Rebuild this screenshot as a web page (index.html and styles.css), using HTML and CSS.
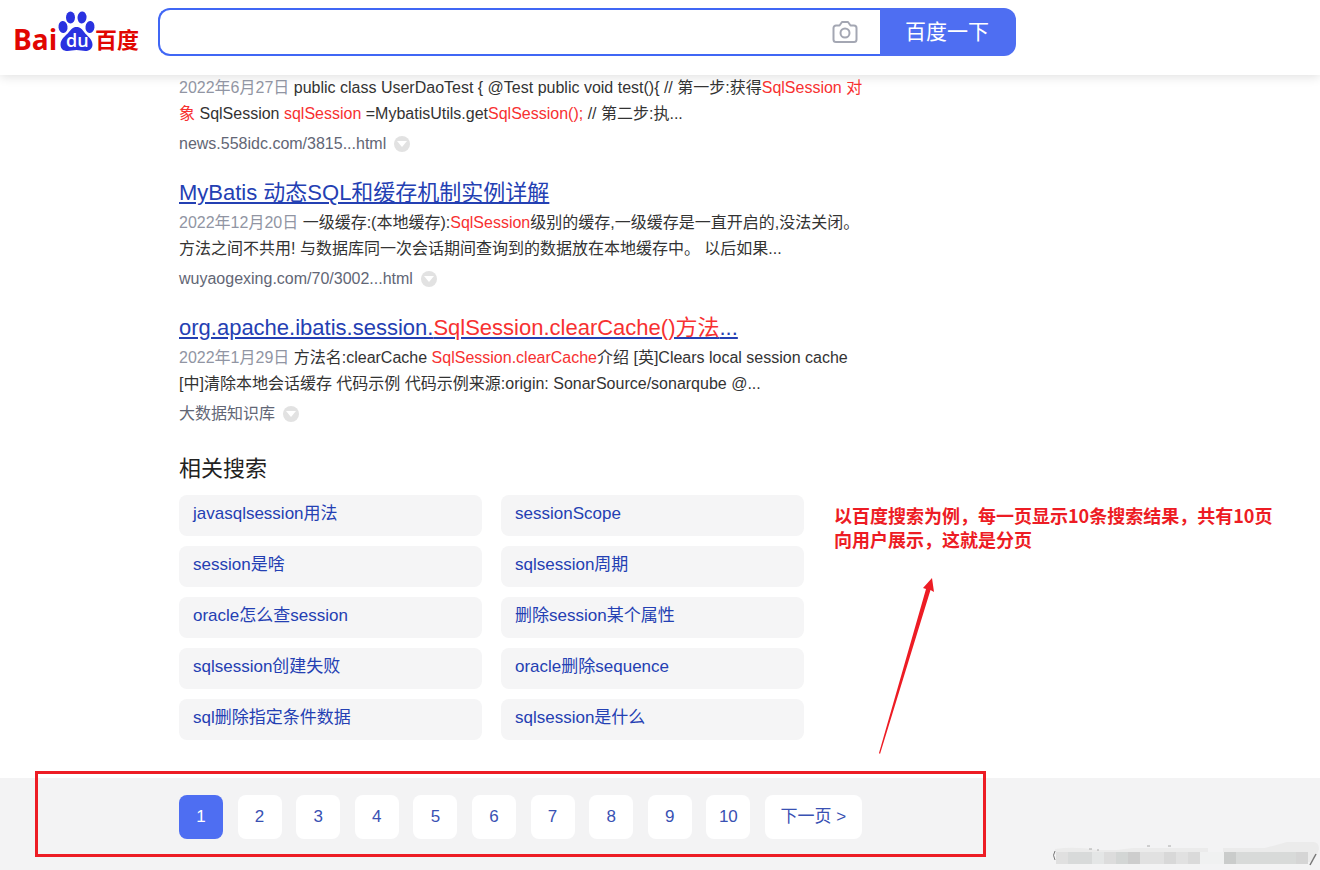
FILE: index.html
```html
<!DOCTYPE html>
<html lang="zh-CN">
<head>
<meta charset="utf-8">
<title>百度搜索</title>
<link rel="stylesheet" href="styles.css">
</head>
<body>
<header class="header">
  <a class="logo" href="#" aria-label="百度首页">
    <svg width="136" height="56" viewBox="-6 0 136 56">
      <g fill="#e10602">
        <text x="-1" y="42" font-size="28" class="logo-latin">Bai</text>
        <text x="81" y="40" font-size="22" class="logo-cjk">百度</text>
      </g>
      <g fill="#2a32e0">
        <ellipse cx="49" cy="19" rx="4.5" ry="6" transform="rotate(-8 49 19)"/>
        <ellipse cx="56.500" cy="9.500" rx="4.500" ry="6"/>
        <ellipse cx="68" cy="9.500" rx="4.500" ry="6" transform="rotate(5 68 9.500)"/>
        <ellipse cx="76" cy="19" rx="4.500" ry="6" transform="rotate(8 76 19)"/>
        <path d="M62.500 19c4 0 6 2.500 8 5.500s8 6.500 8 12c0 4-3 6.500-7 6.500-3 0-5.500-1-9-1s-6 1-9 1c-4 0-7-2-7-6.500 0-5.500 5.500-9 8-12s4-5.500 8-5.500z"/>
      </g>
      <text x="52" y="39" font-size="18" fill="#fff" class="logo-du">du</text>
    </svg>
  </a>
  <form class="search">
    <div class="search-box">
      <input class="search-input" type="text" aria-label="搜索">
      <button class="camera" type="button" aria-label="按图片搜索">
        <svg width="26" height="24" viewBox="0 0 26 24" fill="none" stroke="#a4a7b3" stroke-width="2" stroke-linejoin="round">
          <path d="M4 5.500h3.500L10 2h6l2.500 3.500H22a2.500 2.500 0 0 1 2.500 2.500v11.500A2.500 2.500 0 0 1 22 22H4a2.500 2.500 0 0 1-2.500-2.500V8A2.500 2.500 0 0 1 4 5.500z"/>
          <circle cx="13" cy="13" r="4.500"/>
        </svg>
      </button>
    </div>
    <button class="search-button" type="submit">百度一下</button>
  </form>
</header>

<main class="content">
  <article class="result">
    <p class="snippet"><span class="date">2022年6月27日</span> public class UserDaoTest { @Test public void test(){ // 第一步:获得<em>SqlSession 对<br>象</em> SqlSession <em>sqlSession</em> =MybatisUtils.get<em>SqlSession();</em> // 第二步:执...</p>
    <div class="source"><a href="#">news.558idc.com/3815...html</a><span class="more"></span></div>
  </article>
  <article class="result">
    <h3 class="title"><a href="#">MyBatis 动态SQL和缓存机制实例详解</a></h3>
    <p class="snippet"><span class="date">2022年12月20日</span> 一级缓存:(本地缓存):<em>SqlSession</em>级别的缓存,一级缓存是一直开启的,没法关闭。<br>方法之间不共用! 与数据库同一次会话期间查询到的数据放在本地缓存中。 以后如果...</p>
    <div class="source"><a href="#">wuyaogexing.com/70/3002...html</a><span class="more"></span></div>
  </article>
  <article class="result">
    <h3 class="title"><a href="#">org.apache.ibatis.session.<em>SqlSession.clearCache()方法</em>...</a></h3>
    <p class="snippet"><span class="date">2022年1月29日</span> 方法名:clearCache <em>SqlSession.clearCache</em>介绍 [英]Clears local session cache<br>[中]清除本地会话缓存 代码示例 代码示例来源:origin: SonarSource/sonarqube @...</p>
    <div class="source"><a href="#">大数据知识库</a><span class="more"></span></div>
  </article>

  <section class="related">
    <h2 class="related-title">相关搜索</h2>
    <div class="related-grid">
      <a href="#">javasqlsession用法</a><a href="#">sessionScope</a>
      <a href="#">session是啥</a><a href="#">sqlsession周期</a>
      <a href="#">oracle怎么查session</a><a href="#">删除session某个属性</a>
      <a href="#">sqlsession创建失败</a><a href="#">oracle删除sequence</a>
      <a href="#">sql删除指定条件数据</a><a href="#">sqlsession是什么</a>
    </div>
  </section>
</main>

<footer class="footer">
  <nav class="pages" aria-label="分页">
    <a class="current" href="#" aria-current="page">1</a>
    <a href="#">2</a>
    <a href="#">3</a>
    <a href="#">4</a>
    <a href="#">5</a>
    <a href="#">6</a>
    <a href="#">7</a>
    <a href="#">8</a>
    <a href="#">9</a>
    <a href="#">10</a>
    <a class="next" href="#">下一页 &gt;</a>
  </nav>
  <svg class="mosaic" width="266" height="30" viewBox="0 0 266 30">
    <path d="M2 9q20-3 42 1h20l16-2h75v14H4zM170 8h42l22-6h26q6 0 6 7-2 8-9 13h-87z" fill="#ebebeb"/>
    <path d="M2 11q-3 4 0 9" stroke="#777" fill="none"/>
    <path d="M36 9h3M44 10h2M94 6h3M115 6h3" stroke="#aaa"/>
    <g>
      <path d="M3 12h12v12H3z" fill="#e0e0e0"/>
      <path d="M15 12h24v12H15z" fill="#d8dada"/>
      <path d="M39 12h12v12H39z" fill="#e4e6e6"/>
      <path d="M51 12h12v12H51z" fill="#dcdcdc"/>
      <path d="M63 12h12v12H63z" fill="#d3d6d5"/>
      <path d="M75 12h12v12H75z" fill="#cdcdcd"/>
      <path d="M87 12h24v12H87z" fill="#e1e1e1"/>
      <path d="M111 12h12v12h-12z" fill="#d8d8d8"/>
      <path d="M123 12h12v12h-12z" fill="#e1e1e1"/>
      <path d="M135 12h12v12h-12z" fill="#dadada"/>
      <path d="M147 12h24v12h-24z" fill="#f0f1f1"/>
      <path d="M171 12h12v12h-12z" fill="#cacccb"/>
      <path d="M183 12h60v12h-60z" fill="#d8dad9"/>
      <path d="M243 12h12v12h-12z" fill="#d5d5d5"/>
    </g>
    <path d="M257 25l6-11" stroke="#777" stroke-width="1.500"/>
  </svg>
</footer>

<div class="frame"></div>
<p class="note">以百度搜索为例，每一页显示10条搜索结果，共有10页<br>向用户展示，这就是分页</p>
<svg class="arrow" width="60" height="180" viewBox="0 0 60 180">
  <path d="M53 1L55 15L51.500 13L1 177L0 176L47 12L44 11z" fill="#ed1c24"/>
</svg>
</body>
</html>
```
FILE: styles.css
```css
* { box-sizing: border-box; }
body {
  position: relative;
  margin: 0;
  min-height: 100vh;
  display: flex;
  flex-direction: column;
  background: #fff;
  color: #222;
  font-family: "Liberation Sans", "Noto Sans CJK SC", sans-serif;
  font-size: 16px;
}
a { color: inherit; text-decoration: none; }
em { font-style: normal; color: #f73131; }
p, h2, h3 { margin: 0; font-weight: 400; }

.header {
  display: flex;
  align-items: flex-start;
  height: 75px;
  padding: 8px;
  box-shadow: 0 2px 10px rgba(0, 0, 0, 0.12);
}
.logo { width: 150px; }
.logo svg { display: block; }
.logo-latin { font-family: "Open Sans", "Noto Sans", sans-serif; font-weight: 700; }
.logo-du { font-family: "Open Sans", "Noto Sans", sans-serif; font-weight: 600; }
.logo-cjk { font-family: "Noto Sans CJK SC", sans-serif; font-weight: 700; }
.search { display: flex; flex: 0 1 858px; height: 48px; }
.search-box {
  display: flex;
  flex: 1;
  align-items: center;
  border: 2px solid #4067f5;
  border-right: 0;
  border-radius: 12px 0 0 12px;
  padding-right: 22px;
}
.search-input {
  flex: 1;
  min-width: 0;
  border: 0;
  outline: 0;
  padding: 0 16px;
  background: none;
  font: inherit;
}
.camera { display: flex; padding: 0; border: 0; background: none; }
.search-button {
  width: 136px;
  border: 0;
  border-radius: 0 12px 12px 0;
  padding: 0 8px 4px 6px;
  background: #4e6ef2;
  color: #fff;
  font-family: inherit;
  font-size: 21px;
}

.content { padding-left: 179px; flex: 1; white-space: nowrap; }
.result { margin-bottom: 20px; }
.title { font-size: 22px; line-height: 34px; color: #2440b3; }
.title a { text-decoration: underline; }
.snippet { line-height: 26px; color: #333; }
.date { color: #9195a3; }
.source {
  display: flex;
  align-items: center;
  gap: 8px;
  margin-top: 5px;
  line-height: 24px;
  color: #626675;
}
.more {
  display: flex;
  align-items: center;
  justify-content: center;
  width: 16px;
  height: 16px;
  border-radius: 50%;
  background: #e2e2e2;
}
.more::before {
  content: "";
  border: 5px solid transparent;
  border-top: 6px solid #fff;
  border-bottom: 0;
}
.related { padding-top: 8px; margin-bottom: 38px; }
.related-title { font-size: 22px; line-height: 30px; }
.related-grid {
  display: grid;
  grid-template-columns: 1fr 1fr;
  gap: 10px 19px;
  max-width: 625px;
  margin-top: 11px;
}
.related-grid a {
  padding: 0 14px 3px;
  border-radius: 8px;
  background: #f5f5f6;
  color: #2440b3;
  font-size: 17px;
  line-height: 38px;
}

.footer { position: relative; height: 92px; padding: 17px 0 0 179px; background: #f3f3f4; }
.pages { display: flex; justify-content: space-between; max-width: 683px; }
.pages a {
  width: 44px;
  border-radius: 8px;
  background: #fff;
  color: #3951b3;
  font-size: 17px;
  line-height: 44px;
  text-align: center;
}
.pages .current { background: #4e6ef2; color: #fff; }
.pages .next { width: 97px; }
.mosaic { position: absolute; right: 1px; bottom: 0; }

.frame {
  position: absolute;
  left: 35px;
  top: 771px;
  width: 951px;
  height: 86px;
  border: 3px solid #ed1c24;
  pointer-events: none;
}
.note {
  position: absolute;
  left: 834px;
  top: 503px;
  color: #ed1c24;
  font-family: "Noto Sans CJK SC", sans-serif;
  font-size: 18px;
  font-weight: 700;
  line-height: 24px;
  white-space: nowrap;
}
.arrow { position: absolute; left: 879px; top: 577px; }
```
